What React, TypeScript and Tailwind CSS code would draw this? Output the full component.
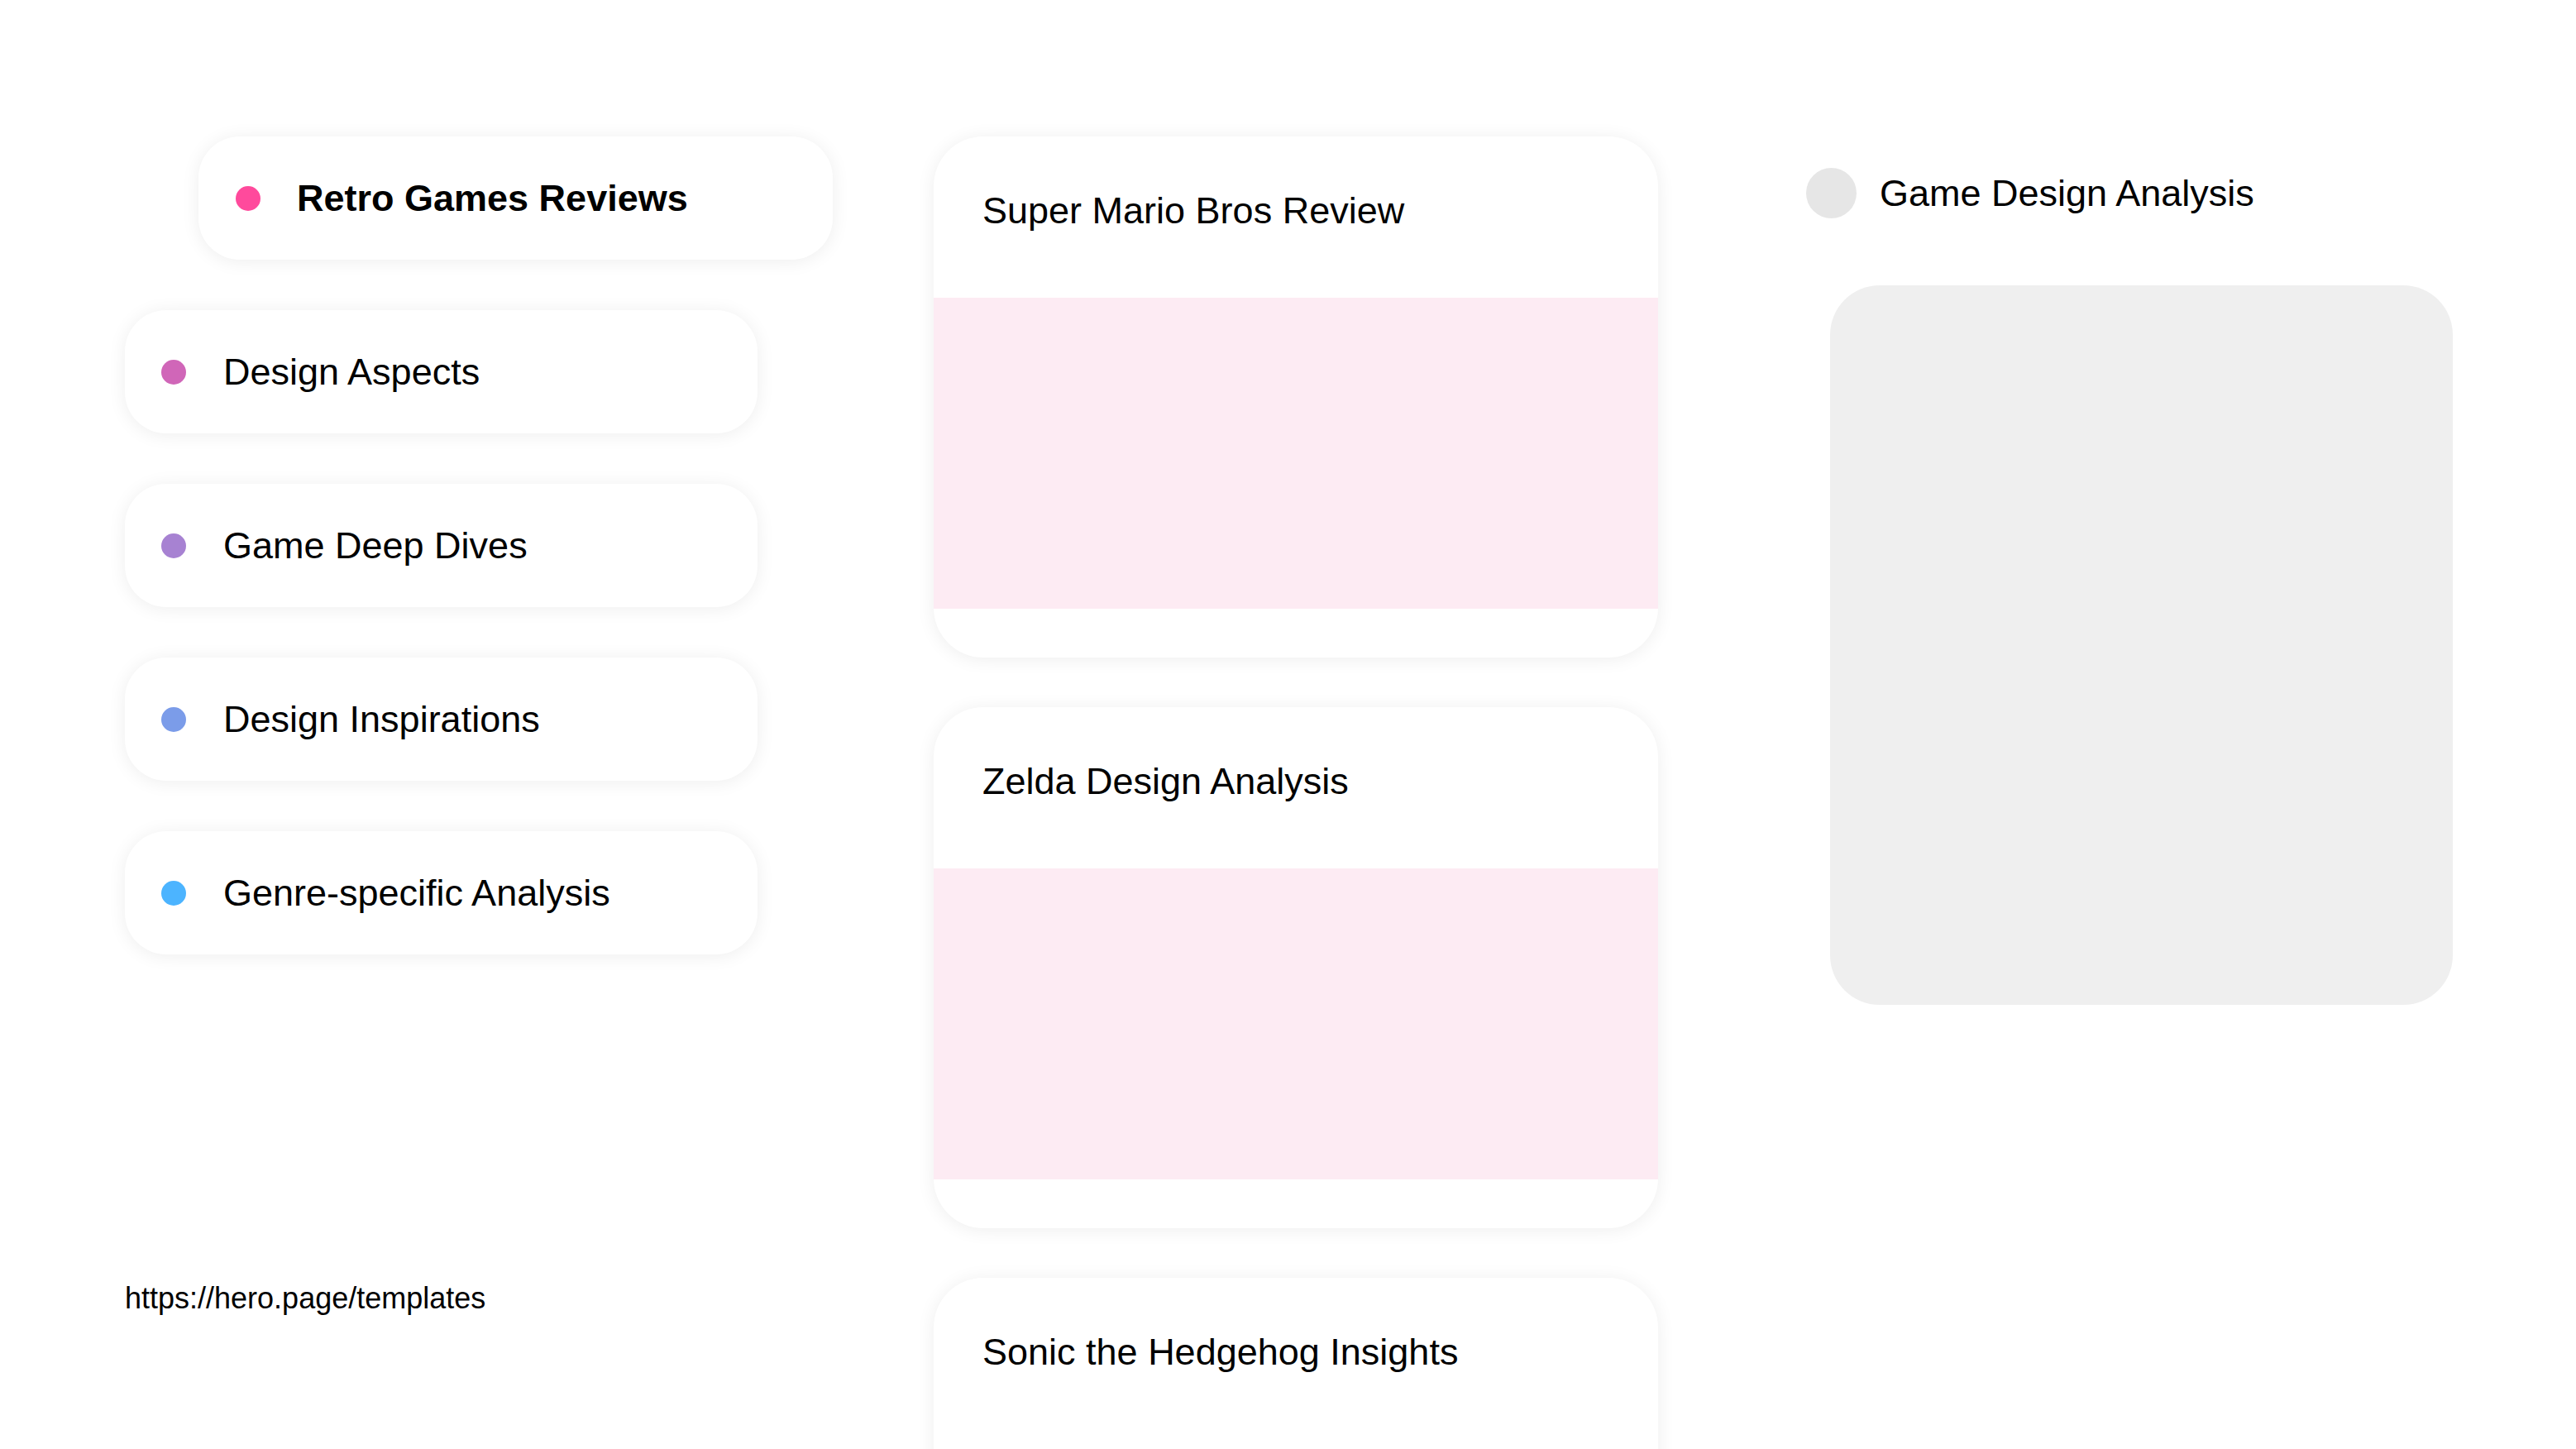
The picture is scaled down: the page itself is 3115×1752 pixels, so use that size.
import React from 'react'

const topics = [
  { name: 'Design Aspects', color: 'bg-[#d066b8]' },
  { name: 'Game Deep Dives', color: 'bg-[#a782d2]' },
  { name: 'Design Inspirations', color: 'bg-[#7b9ce9]' },
  { name: 'Genre-specific Analysis', color: 'bg-[#4cb4ff]' },
]

const posts = [
  { title: 'Super Mario Bros Review', media: true },
  { title: 'Zelda Design Analysis', media: true },
  { title: 'Sonic the Hedgehog Insights', media: false },
]

const cardShadow = 'shadow-[0_2px_22px_rgba(0,0,0,0.07)]'

const TopicPill = ({ name, color }: { name: string; color: string }) => (
  <div className={`mt-[61px] flex h-[149px] w-[765px] items-center gap-[45px] rounded-[50px] bg-white pl-[44px] ${cardShadow}`}>
    <span className={`h-[30px] w-[30px] shrink-0 rounded-full ${color}`} />
    <span className="text-[45px] leading-[52px]">{name}</span>
  </div>
)

const PostCard = ({ title, media }: { title: string; media: boolean }) => (
  <div className={`flex h-[630px] w-[876px] shrink-0 flex-col overflow-hidden rounded-[60px] bg-white ${cardShadow}`}>
    <div className="h-[195px] shrink-0 px-[59px] pt-[64px] text-[45px] leading-[52px]">{title}</div>
    {media && <div className="h-[376px] shrink-0 bg-[#fdebf3]" />}
  </div>
)

export default function App() {
  return (
    <div className="flex h-[1752px] w-full overflow-hidden bg-white pl-[151px] pt-[165px] font-['Liberation_Sans',Arial,sans-serif] text-black">
      {/* categories */}
      <div className="flex w-[856px] shrink-0 flex-col">
        <div className={`ml-[89px] flex h-[149px] w-[767px] items-center gap-[44px] rounded-[50px] bg-white pl-[45px] ${cardShadow}`}>
          <span className="h-[30px] w-[30px] shrink-0 rounded-full bg-[#ff4a9c]" />
          <span className="text-[45px] font-bold leading-[52px]">Retro Games Reviews</span>
        </div>
        {topics.map((t) => (
          <TopicPill key={t.name} name={t.name} color={t.color} />
        ))}
        <div className="mt-[395px] text-[36px] leading-[41px]">https://hero.page/templates</div>
      </div>

      {/* posts */}
      <div className="ml-[122px] flex shrink-0 flex-col gap-[60px]">
        {posts.map((p) => (
          <PostCard key={p.title} title={p.title} media={p.media} />
        ))}
      </div>

      {/* preview */}
      <div className="ml-[179px] flex shrink-0 flex-col">
        <div className="mt-[38px] flex items-center gap-[28px]">
          <span className="h-[61px] w-[61px] shrink-0 rounded-full bg-[#e6e6e6]" />
          <span className="text-[45px] leading-[52px]">Game Design Analysis</span>
        </div>
        <div className="ml-[29px] mt-[81px] h-[870px] w-[753px] rounded-[60px] bg-[#efefef]" />
      </div>
    </div>
  )
}
